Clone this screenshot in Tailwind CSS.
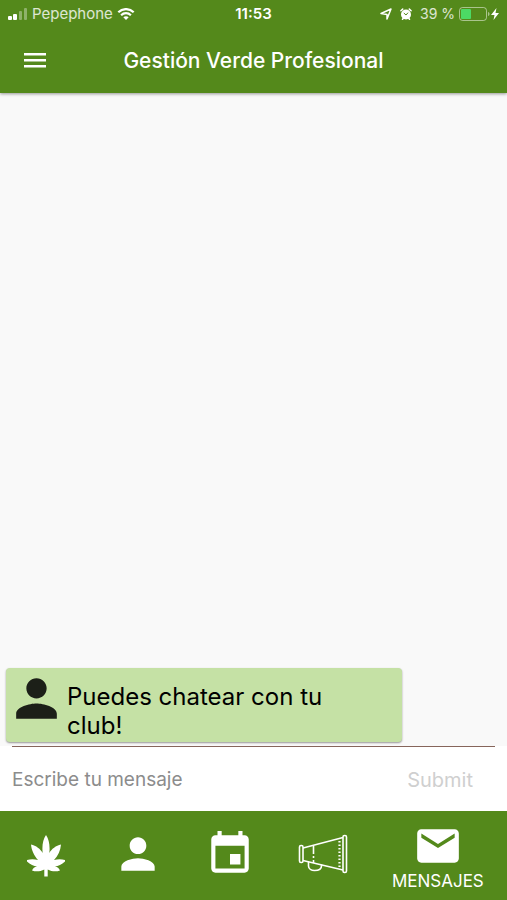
<!DOCTYPE html>
<html lang="es">
<head>
  <meta charset="UTF-8" />
  <meta name="viewport" content="width=device-width, initial-scale=1.0"/>
  <title>Gestión Verde Profesional - Mensajes</title>
  <script src="https://cdn.jsdelivr.net/npm/@tailwindcss/browser@4"></script>
</head>
<body class="flex min-h-screen flex-col bg-[#f9f9f9] font-['Inter',sans-serif]">

  <!-- HEADER -->
  <header class="relative bg-[#54891b] text-white shadow-[0_1px_3px_rgba(0,0,0,0.4)]">
    <!-- Status bar -->
    <div class="grid h-7 grid-cols-[1fr_auto_1fr] items-center px-2 text-[15px] leading-7">
      <div class="flex items-center gap-1 text-white/80">
        <svg class="h-3 w-5" viewBox="0 0 20 12" fill="#fff">
          <rect x="0" y="8" width="4" height="4" rx="1"/>
          <rect x="5" y="6" width="4" height="6" rx="1"/>
          <rect x="11" y="3" width="3" height="9" rx="1" opacity=".35"/>
          <rect x="16" y="0" width="3" height="12" rx="1" opacity=".35"/>
        </svg>
        <span>Pepephone</span>
        <svg class="h-3 w-[18px]" viewBox="0 0 17 12" fill="none" stroke="#fff" stroke-width="2.200">
          <path d="M.8 4.300C5.200 0 11.800 0 16.200 4.300"/>
          <path d="M3.600 7.200c2.800-2.700 7-2.700 9.800 0"/>
          <path d="M8.500 12 5.800 9.300c1.500-1.400 3.900-1.400 5.400 0z" fill="#fff" stroke="none"/>
        </svg>
      </div>
      <span class="font-semibold">11:53</span>
      <div class="flex items-center justify-end gap-1 text-sm text-white/80">
        <svg class="mr-1 size-3" viewBox="0 0 12 12" fill="none" stroke="#fff" stroke-width="1.500" stroke-linejoin="round"><path d="M11 1 7 11V6.500L1 5.500z"/></svg>
        <svg class="mr-1 size-3" viewBox="0 0 12 12" fill="none" stroke="#fff">
          <circle cx="6" cy="6.500" r="5" fill="#fff" stroke="none"/>
          <path d="M.9 2.700 2.700 1.100M11.100 2.700 9.300 1.100M2.500 11.300l1-1.300M9.500 11.300 8.500 10" stroke-width="1.500" stroke-linecap="round"/>
          <path d="M3.800 5 6 7l2-2.300" stroke="#54891b"/>
        </svg>
        <span>39 %</span>
        <svg class="h-4 w-8" viewBox="0 0 32 16">
          <rect x=".5" y="1.500" width="27" height="13" rx="3" fill="none" stroke="#fff" stroke-opacity=".5"/>
          <path d="M29 6c2 .5 2 3.500 0 4z" fill="#fff" opacity=".5"/>
          <rect x="2" y="3" width="10" height="10" rx="1" fill="#4cd964"/>
        </svg>
        <svg class="-ml-1 h-3 w-2" viewBox="0 0 8 12" fill="#fff"><path d="M5.500 0 0 7h3.500L2.500 12 8 5H4.500z"/></svg>
      </div>
    </div>
    <!-- App bar -->
    <div class="grid h-[65px] grid-cols-[70px_1fr_70px] items-center">
      <button type="button" aria-label="Menú" class="flex justify-center">
        <svg class="h-4 w-6" viewBox="0 0 24 16" fill="#fff"><path d="M1 0h22v2.600H1zM1 6h22v2.600H1zM1 12h22v2.600H1z"/></svg>
      </button>
      <h1 class="text-center text-[21px] font-medium leading-7">Gestión Verde Profesional</h1>
    </div>
  </header>

  <!-- CHAT -->
  <main class="flex flex-1 flex-col justify-end px-[6px] pb-1">
    <div class="flex w-4/5 rounded-sm bg-[#c5e1a5] pb-[2px] text-black shadow-[0_1px_2px_rgba(0,0,0,0.4)]">
      <svg class="size-[61px] shrink-0" viewBox="0 0 24 24" fill="#1c1f18"><path d="M12 12c2.210 0 4-1.790 4-4s-1.790-4-4-4-4 1.790-4 4 1.790 4 4 4zm0 2c-2.670 0-8 1.340-8 4v2h16v-2c0-2.660-5.330-4-8-4z"/></svg>
      <p class="pr-10 pt-[14px] text-2xl leading-[29px]">Puedes chatear con tu club!</p>
    </div>
  </main>

  <!-- COMPOSER -->
  <form class="bg-white px-3">
    <div class="flex h-[65px] items-center border-t border-[#86655b] pt-[2px]">
      <input type="text" aria-label="Mensaje" placeholder="Escribe tu mensaje" class="min-w-0 flex-1 text-[19px] leading-6 outline-none placeholder:text-[#8c8c8c]">
      <button type="submit" disabled class="px-[22px] text-xl leading-6 text-[#cfcfcf]">Submit</button>
    </div>
  </form>

  <!-- BOTTOM NAV -->
  <nav class="grid h-[89px] grid-cols-[2fr_2fr_2fr_2fr_3fr] items-center bg-[#54891b] text-white">
    <a href="#" aria-label="Plantas" class="flex justify-center">
      <svg class="h-[42px] w-[38px]" viewBox="0 0 38 42" fill="#fff">
        <path d="M19 0c3 4 4.200 11 3.300 18C24.500 14 29 10.500 34 9.500c-.5 6-3 11.500-7 15.500 4-1 8-1.200 12 .5-3.500 3.500-7.500 5.500-11 6 2.500.5 4 1.700 5 4-4 1.500-8.500 1-12.300-1V41.500h-3.400V34.500c-3.800 2-8.300 2.500-12.300 1 1-2.300 2.500-3.500 5-4-3.500-.5-7.500-2.500-11-6 4-1.700 8-1.500 12-.5C7.500 21 4.500 15.500 4 9.500c5 1 9.500 4.500 11.700 8.500C14.800 11 16 4 19 0z"/>
      </svg>
    </a>
    <a href="#" aria-label="Perfil" class="flex justify-center pb-1">
      <svg class="size-[50px]" viewBox="0 0 24 24" fill="#fff"><path d="M12 12c2.210 0 4-1.790 4-4s-1.790-4-4-4-4 1.790-4 4 1.790 4 4 4zm0 2c-2.670 0-8 1.340-8 4v2h16v-2c0-2.660-5.330-4-8-4z"/></svg>
    </a>
    <a href="#" aria-label="Calendario" class="flex justify-center pb-1">
      <svg class="size-[50px]" viewBox="0 0 24 24" fill="#fff"><path d="M17 12h-5v5h5v-5zM16 1v2H8V1H6v2H5c-1.110 0-1.990.9-1.990 2L3 19c0 1.100.89 2 2 2h14c1.100 0 2-.9 2-2V5c0-1.100-.9-2-2-2h-1V1h-2zm3 18H5V8h14v11z"/></svg>
    </a>
    <a href="#" aria-label="Avisos" class="flex justify-center pb-1">
      <svg class="h-10 w-[50px]" viewBox="0 0 50 40" fill="none" stroke="#fff" stroke-width="1.600" stroke-linejoin="round">
        <rect x="1.500" y="11.500" width="3.500" height="17" rx="1.500"/>
        <rect x="45" y="1.500" width="3.500" height="37" rx="1.500"/>
        <path d="M5 14 45 3.500M5 26.500l40 9.500"/>
        <path d="M15.500 12v8M15.500 22v2M15.500 26v3"/>
        <path d="M10.500 28v4c0 3 3 4.500 6 4.500 4 0 7-1 7-4.500v-1.500"/>
        <path d="M41.500 7v26" stroke-width="2.200" stroke-dasharray="1.500 2"/>
      </svg>
    </a>
    <a href="#" class="flex flex-col items-center">
      <svg class="size-[50px]" viewBox="0 0 24 24" fill="#fff"><path d="M20 4H4c-1.100 0-1.990.9-1.990 2L2 18c0 1.100.9 2 2 2h16c1.100 0 2-.9 2-2V6c0-1.100-.9-2-2-2zm0 4l-8 5-8-5V6l8 5 8-5v2z"/></svg>
      <span class="text-[17px] leading-5">MENSAJES</span>
    </a>
  </nav>

</body>
</html>
